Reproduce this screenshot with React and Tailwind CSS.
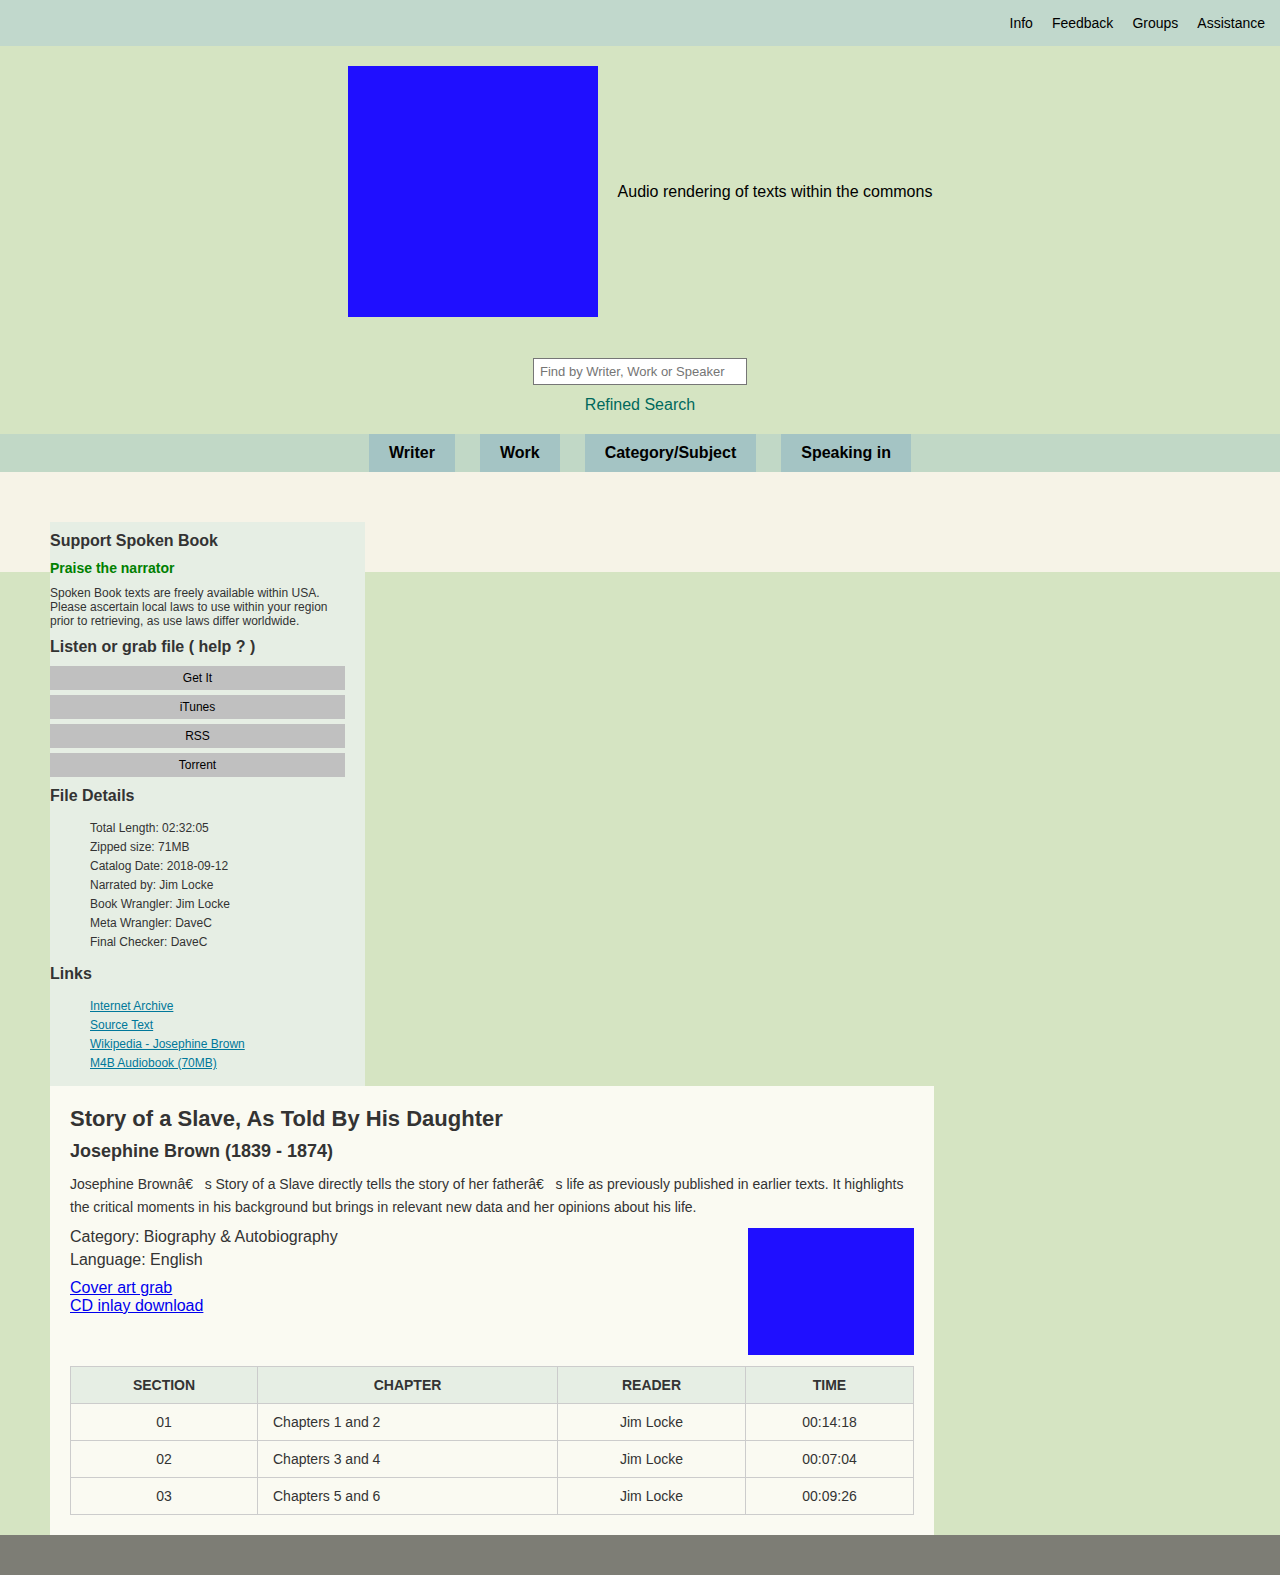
import React from 'react';

// Static data for the page
const navLinks = ['Info', 'Feedback', 'Groups', 'Assistance'];
const browseTabs = ['Writer', 'Work', 'Category/Subject', 'Speaking in'];
const grabButtons = ['Get It', 'iTunes', 'RSS', 'Torrent'];

const fileDetails = [
  'Total Length: 02:32:05',
  'Zipped size: 71MB',
  'Catalog Date: 2018-09-12',
  'Narrated by: Jim Locke',
  'Book Wrangler: Jim Locke',
  'Meta Wrangler: DaveC',
  'Final Checker: DaveC',
];

const links = [
  'Internet Archive',
  'Source Text',
  'Wikipedia - Josephine Brown',
  'M4B Audiobook (70MB)',
];

const sections = [
  { id: '01', chapter: 'Chapters 1 and 2', reader: 'Jim Locke', time: '00:14:18' },
  { id: '02', chapter: 'Chapters 3 and 4', reader: 'Jim Locke', time: '00:07:04' },
  { id: '03', chapter: 'Chapters 5 and 6', reader: 'Jim Locke', time: '00:09:26' },
];

// Top bar with the help links
const TopBar = () => (
  <div className="h-[46px] bg-[#c1d8cc] flex items-center justify-end pr-[15px] gap-[19px] text-[14px] text-black">
    {navLinks.map((link) => (
      <a key={link} href="#" className="leading-4">
        {link}
      </a>
    ))}
  </div>
);

// Logo, tagline and search box
const Masthead = () => (
  <div className="pt-5 pb-5">
    <div className="flex items-center justify-center gap-5">
      <div className="w-[250px] h-[251px] bg-[#1f0fff]"></div>
      <p className="text-[16px] leading-[18px] text-black">Audio rendering of texts within the commons</p>
    </div>
    <div className="mt-[41px] flex flex-col items-center">
      <input
        type="text"
        placeholder="Find by Writer, Work or Speaker"
        className="w-[214px] h-[27px] bg-white border border-[#767676] px-[6px] text-[13px] placeholder:text-[#757575] outline-none"
      />
      <a href="#" className="mt-[11px] text-[16px] leading-[18px] text-[#00695c]">
        Refined Search
      </a>
    </div>
  </div>
);

// Browse tabs under the masthead
const BrowseBar = () => (
  <div className="h-[38px] bg-[#c1d8c6] flex justify-center gap-[25px]">
    {browseTabs.map((tab) => (
      <div key={tab} className="h-full px-5 bg-[#a4c4c4] flex items-center text-[16px] font-bold text-black">
        {tab}
      </div>
    ))}
  </div>
);

// Left column
const Sidebar = () => (
  <div className="w-[315px] bg-[#e6eee4] pr-5 pt-[10px] pb-[13px] text-[#333]">
    <h3 className="text-[16px] leading-[18px] font-bold">Support Spoken Book</h3>
    <h4 className="mt-[10px] text-[14px] leading-4 font-bold text-[#008000]">Praise the narrator</h4>
    <p className="mt-[10px] text-[12px] leading-[14px]">
      Spoken Book texts are freely available within USA. Please ascertain local laws to use within your region prior to retrieving, as use laws differ worldwide.
    </p>
    <h3 className="mt-[10px] text-[16px] leading-[18px] font-bold">Listen or grab file ( help ? )</h3>
    <div className="mt-[10px] flex flex-col gap-[5px]">
      {grabButtons.map((b) => (
        <button key={b} className="h-6 w-full bg-[#c0c0c0] text-[12px] text-black">
          {b}
        </button>
      ))}
    </div>
    <h3 className="mt-[10px] text-[16px] leading-[18px] font-bold">File Details</h3>
    <ul className="mt-[14px] pl-10 text-[12px] leading-[19px]">
      {fileDetails.map((d) => (
        <li key={d}>{d}</li>
      ))}
    </ul>
    <h3 className="mt-[13px] text-[16px] leading-[18px] font-bold">Links</h3>
    <ul className="mt-[14px] pl-10 text-[12px] leading-[19px]">
      {links.map((l) => (
        <li key={l}>
          <a href="#" className="underline text-[#00789a]">
            {l}
          </a>
        </li>
      ))}
    </ul>
  </div>
);

// Book details card with the chapter table
const BookCard = () => (
  <div className="w-[884px] bg-[#fafaf2] p-5 text-[#333]">
    <h1 className="text-[22px] leading-[25px] font-bold">Story of a Slave, As Told By His Daughter</h1>
    <h2 className="mt-[10px] text-[18px] leading-[21px] font-bold">Josephine Brown (1839 - 1874)</h2>
    <p className="mt-[11px] text-[14px] leading-[23px]">
      Josephine Brownâ€&nbsp;&nbsp;&nbsp;s Story of a Slave directly tells the story of her fatherâ€&nbsp;&nbsp;&nbsp;s life as previously published in earlier texts. It highlights the critical moments in his background but brings in relevant new data and her opinions about his life.
    </p>
    <div className="mt-[6px] flex justify-between items-start">
      <div>
        <div className="text-[16px] leading-[23px]">Category: Biography &amp; Autobiography</div>
        <div className="text-[16px] leading-[23px]">Language: English</div>
        <div className="mt-[8px] flex flex-col text-[16px] leading-[18px]">
          <a href="#" className="underline text-[#0000ee]">Cover art grab</a>
          <a href="#" className="underline text-[#0000ee]">CD inlay download</a>
        </div>
      </div>
      <div className="mt-[3px] w-[166px] h-[127px] bg-[#1f0fff]"></div>
    </div>
    <table className="mt-[11px] w-full border-collapse text-[14px]">
      <thead>
        <tr className="bg-[#e6eee4] h-[37px]">
          <th className="w-[187px] border border-[#cccccc] font-bold">SECTION</th>
          <th className="w-[300px] border border-[#cccccc] font-bold">CHAPTER</th>
          <th className="w-[188px] border border-[#cccccc] font-bold">READER</th>
          <th className="border border-[#cccccc] font-bold">TIME</th>
        </tr>
      </thead>
      <tbody>
        {sections.map((s) => (
          <tr key={s.id} className="h-[37px]">
            <td className="border border-[#cccccc] text-center">{s.id}</td>
            <td className="border border-[#cccccc] px-[15px]">{s.chapter}</td>
            <td className="border border-[#cccccc] text-center">{s.reader}</td>
            <td className="border border-[#cccccc] text-center">{s.time}</td>
          </tr>
        ))}
      </tbody>
    </table>
  </div>
);

export default function App() {
  return (
    <div className="min-h-[1575px] flex flex-col bg-[#d5e4c2] font-['Liberation_Sans',Arial,sans-serif]">
      <TopBar />
      <Masthead />
      <BrowseBar />
      <main className="flex-1">
        {/* cream band the sidebar hangs over */}
        <div className="h-[100px] bg-[#f6f3e7]"></div>
        <div className="relative -mt-[50px] pl-[50px]">
          <Sidebar />
          <BookCard />
        </div>
      </main>
      <footer className="h-10 bg-[#7d7d75]"></footer>
    </div>
  );
}
